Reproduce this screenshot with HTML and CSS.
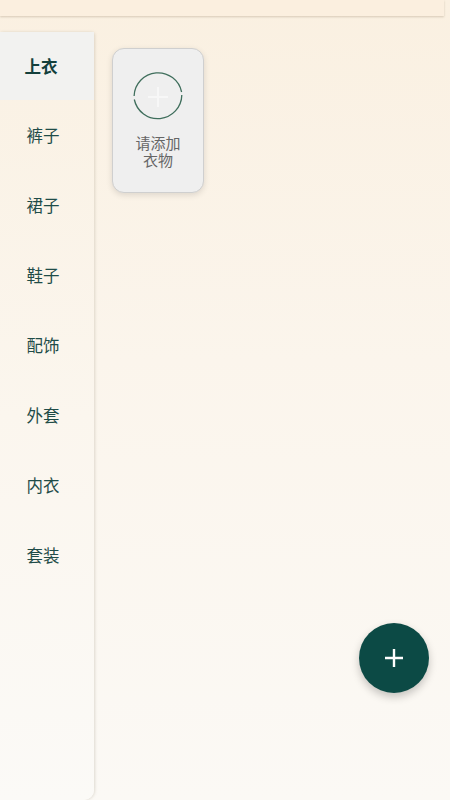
FILE: index.html
```html
<!DOCTYPE html>
<html lang="zh">
<head>
<meta charset="utf-8">
<link rel="stylesheet" href="styles.css">
</head>
<body>
<div class="app">
  <div class="topbar"></div>
  <div class="main">
    <nav class="sidebar">
      <div class="cat active">上衣</div>
      <div class="cat">裤子</div>
      <div class="cat">裙子</div>
      <div class="cat">鞋子</div>
      <div class="cat">配饰</div>
      <div class="cat">外套</div>
      <div class="cat">内衣</div>
      <div class="cat">套装</div>
    </nav>
    <section class="content">
      <div class="add-card">
        <svg class="add-icon" width="52" height="52" viewBox="0 0 52 52">
          <path d="M2.3 28.5 A24 24 0 0 0 49.8 24" fill="none" stroke="#3f6e5c" stroke-width="1.3"/>
          <path d="M49.6 21 A24 24 0 0 0 2.1 25" fill="none" stroke="#3f6e5c" stroke-width="1.3"/>
          <path d="M26 16 V36 M16 26 H36" stroke="#f7f7f7" stroke-width="2" fill="none"/>
        </svg>
        <div class="add-text">
          <span class="line">请添加</span>
          <span class="line">衣物</span>
        </div>
      </div>
    </section>
  </div>
  <button class="fab" aria-label="添加">
    <svg width="22" height="22" viewBox="0 0 22 22"><path d="M11 2 V20 M2 11 H20" stroke="#ffffff" stroke-width="2.4" fill="none"/></svg>
  </button>
</div>
</body>
</html>
```
FILE: styles.css
```css
html, body {
  margin: 0;
  padding: 0;
}
body {
  width: 450px;
  height: 800px;
  overflow: hidden;
  font-family: "Noto Sans CJK SC", "Noto Sans", sans-serif;
  background: linear-gradient(180deg, #faf0e1 0%, #fbf5ec 45%, #fbf9f5 100%);
}
.app {
  position: relative;
  width: 450px;
  height: 800px;
  display: flex;
  flex-direction: column;
}
.topbar {
  height: 16px;
  flex: none;
  background: #fbefdf;
  box-shadow: 0 1px 2px rgba(150, 130, 100, 0.35);
  margin-right: 6px;
}
.main {
  flex: 1;
  display: flex;
  padding-top: 16px;
  gap: 18px;
}
.sidebar {
  width: 94px;
  flex: none;
  display: flex;
  flex-direction: column;
  background: linear-gradient(180deg, #faf1e3 0%, #fbf6ee 50%, #fbfaf7 100%);
  border-radius: 0 4px 10px 0;
  box-shadow: 1px 0 3px rgba(150, 140, 120, 0.28);
}
.cat {
  height: 70px;
  display: flex;
  align-items: center;
  justify-content: center;
  padding-right: 8px;
  font-size: 16.5px;
  color: #1f4c48;
}
.cat.active {
  height: 68px;
  background: #f2f2f0;
  font-weight: 700;
  color: #14403c;
  padding-right: 12px;
}
.content {
  flex: 1;
  padding-top: 16px;
}
.add-card {
  width: 92px;
  height: 145px;
  box-sizing: border-box;
  border: 1.5px solid #cfcfcf;
  border-radius: 12px;
  background: #efefef;
  box-shadow: 0 2px 6px rgba(0, 0, 0, 0.12);
  display: flex;
  flex-direction: column;
  align-items: center;
  padding-top: 21.5px;
}
.add-icon {
  display: block;
}
.add-text {
  margin-top: 11px;
  display: flex;
  flex-direction: column;
  align-items: center;
  font-size: 15px;
  color: #666666;
}
.line {
  display: block;
  line-height: 17.5px;
}
.fab {
  position: absolute;
  left: 359px;
  top: 623px;
  width: 70px;
  height: 70px;
  border-radius: 50%;
  border: none;
  padding: 0;
  background: #0c4a45;
  box-shadow: 0 4px 8px rgba(0, 0, 0, 0.22);
  display: flex;
  align-items: center;
  justify-content: center;
}
.fab svg {
  display: block;
}
```
